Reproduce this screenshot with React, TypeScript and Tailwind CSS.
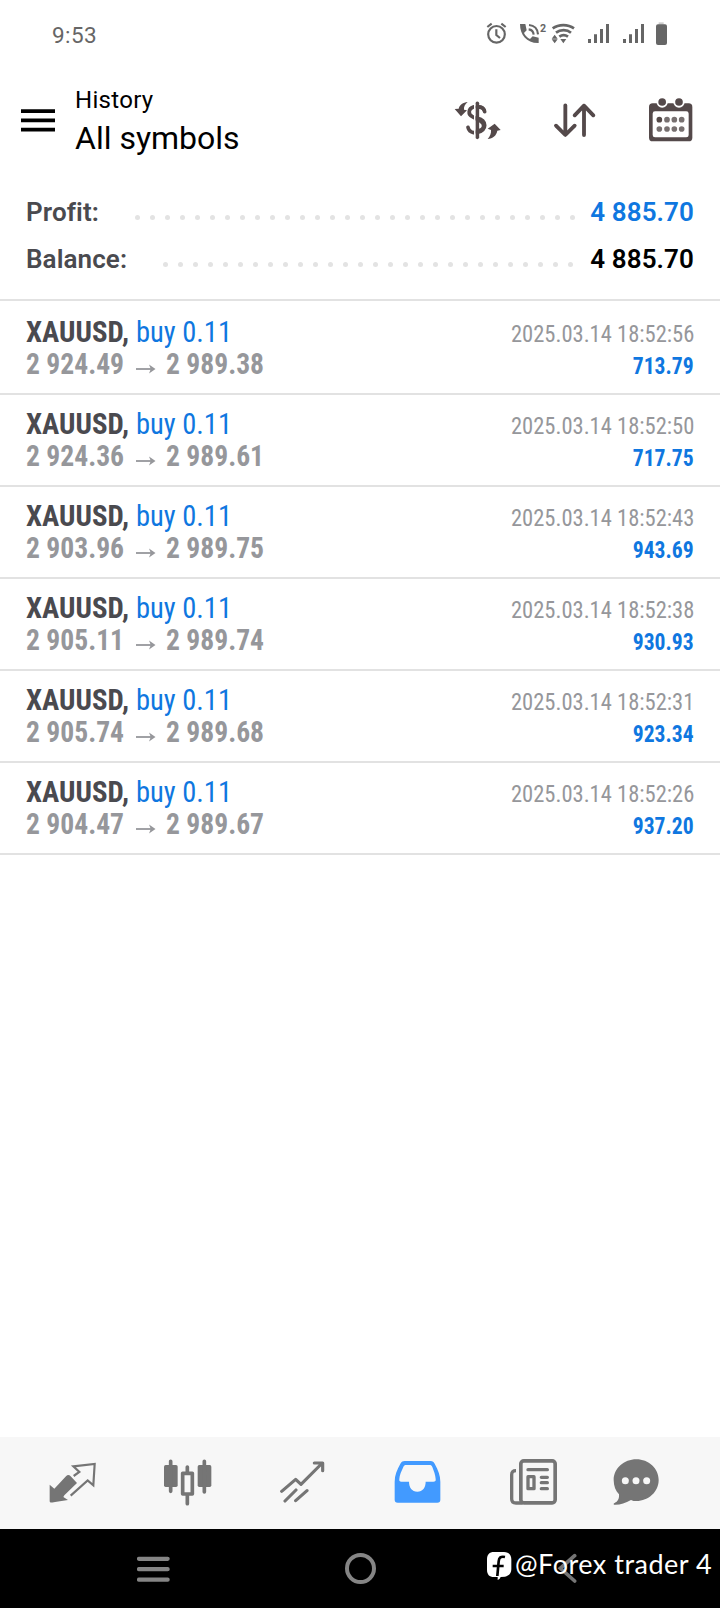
import type { ReactNode } from "react";

const GLYPH = "#54494a";
const TAB = "#757575";

function Icon({ box, className, children }: { box: string; className: string; children: ReactNode }) {
  return (
    <svg viewBox={box} className={`block shrink-0 ${className}`} fill="none" aria-hidden="true">
      {children}
    </svg>
  );
}

function Signal() {
  return (
    <Icon box="0 0 69 69" className="h-[23px] w-[23px]">
      <path fill="#666" d="M3 51h9v12H3zM21 37h9v26h-9zM39 21h9v42h-9zM57 6h9v57h-9z" />
    </Icon>
  );
}

function StatusBar() {
  return (
    <div className="flex h-[70px] items-start pt-[22px] pl-[52px]">
      <span className="-mt-px w-[434px] text-[22.5px] leading-[28px] font-[450] tracking-[0.4px] text-[#666]">9:53</span>
      <Icon box="138 66 63 69" className="h-[23px] w-[21px]">
        <circle cx="169.500" cy="103" r="25" stroke="#666" strokeWidth="6.500" />
        <path d="M169 88v17l11 9M142 81l13-10M197 81l-13-10" stroke="#666" strokeWidth="6.500" />
      </Icon>
      <Icon box="237 66 84 69" className="ml-3 h-[23px] w-[28px]">
        <path
          fill="#666"
          d="M240 72h16l4 19-8 8c4 9 10 14 18 18l8-8 18 4v16c-36 1-56-24-56-57z"
        />
        <path d="M267 75c16 1 26 12 27 28M266 88c9 1 14 7 15 16" stroke="#666" strokeWidth="6.500" />
        <text x="300" y="95" fontSize="32" fontWeight="700" fill="#666" fontFamily="Roboto, sans-serif">
          2
        </text>
      </Icon>
      <Icon box="333 66 75 69" className="ml-1 h-[23px] w-[25px]">
        <path d="M338 85c18-13 46-13 64 0M348 98c13-10 33-10 45 0M358 110c8-6 18-6 26 0" stroke="#666" strokeWidth="8" />
        <path fill="#666" d="M335 116l9-12 9 12zM335 118h18l-9 12zM361 117h18l-9 13z" />
      </Icon>
      <div className="ml-[11px] flex gap-3">
        <Signal />
        <Signal />
      </div>
      <Icon box="645 66 39 72" className="ml-2.5 h-6 w-[13px]">
        <path fill="#ccc" d="M656 67h15v7h-15z" />
        <rect x="648" y="73" width="33" height="62" rx="6" fill="#666" />
      </Icon>
    </div>
  );
}

function Header() {
  return (
    <header className="flex h-[114px] items-start">
      <Icon box="0 0 34 23" className="mt-[39px] ml-[21px] h-[23px] w-[34px]">
        <path fill="#000" d="M0 .2h34v3.800H0zM0 9.500h34v3.800H0zM0 18.800h34v3.800H0z" />
      </Icon>
      <div className="ml-5 w-[379px] pt-[16px] text-black">
        <div className="text-[24px] leading-[28px] tracking-[0.3px]">History</div>
        <h1 className="mt-[4px] text-[32px] leading-[40px] font-normal">All symbols</h1>
      </div>
      <Icon box="42 297 144 126" className="mt-[29px] h-[42px] w-12">
        <path d="M112 310v102" stroke={GLYPH} strokeWidth="11" strokeLinecap="round" />
        <path
          d="M133 331c-4-8-11-10-21-10M100 321c-15 5-17 22-3 29l26 14c14 9 9 28-11 28M101 398c-10-2-15-7-17-16"
          stroke={GLYPH}
          strokeWidth="11"
          strokeLinecap="round"
        />
        <path d="M112 321c12-2 21 4 22 14M112 355c29 3 30 38 0 42" stroke={GLYPH} strokeWidth="11" strokeLinecap="round" />
        <path d="M104 306v108" stroke="#fff" strokeWidth="4" />
        <path fill={GLYPH} d="M83 306c-14 2-24 8-27 20l-12 1 19 22 18-18-9-2c-1-9 3-16 11-23z" />
        <path fill={GLYPH} d="M143 417c16-2 26-10 29-25l10-2-18-19-21 15 10 4c1 10-3 19-10 27z" />
      </Icon>
      <Icon box="336 303 135 114" className="mt-[31px] ml-[50px] h-[38px] w-[45px]">
        <path
          d="M376 316v88M348 377l28 28 28-28M432 405v-88M404 346l28-29 28 29"
          stroke={GLYPH}
          strokeWidth="11.500"
          strokeLinecap="round"
          strokeLinejoin="round"
        />
      </Icon>
      <Icon box="621 288 144 141" className="mt-[26px] ml-[50px] h-[47px] w-12">
        <rect x="627" y="310" width="130" height="114" rx="11" fill={GLYPH} />
        <rect x="638" y="334" width="108" height="78" rx="7" fill="#fff" />
        <circle cx="666.500" cy="306" r="17" fill="#fff" />
        <circle cx="717" cy="306" r="17" fill="#fff" />
        <circle cx="666.500" cy="306" r="11.500" fill={GLYPH} />
        <circle cx="717" cy="306" r="11.500" fill={GLYPH} />
        {[658, 681, 703, 725].map((x) => (
          <g key={x}>
            <circle cx={x} cy="359" r="8.500" fill={x === 658 ? "#544948" : "#777070"} />
            <circle cx={x} cy="387" r="8.500" fill="#777070" />
          </g>
        ))}
      </Icon>
    </header>
  );
}

function SummaryLine({ label, value, dots, tone, lead }: { label: string; value: string; dots: number; tone: string; lead: string }) {
  return (
    <div className="flex h-[47px] items-start text-[26px] leading-[30px] font-semibold">
      <span className={`${lead} tracking-[0.1px] text-[#4a4a4f]`}>{label}</span>
      <span className="mt-[18px] flex flex-1 gap-[10px]">
        {Array.from({ length: dots }, (_, i) => (
          <i key={i} className="block size-[5px] rounded-full bg-[#e3e3e3]" />
        ))}
      </span>
      <span className={`tracking-[0.1px] ${tone}`}>{value}</span>
    </div>
  );
}

const deals = [
  { open: "2 924.49", close: "2 989.38", time: "2025.03.14 18:52:56", profit: "713.79" },
  { open: "2 924.36", close: "2 989.61", time: "2025.03.14 18:52:50", profit: "717.75" },
  { open: "2 903.96", close: "2 989.75", time: "2025.03.14 18:52:43", profit: "943.69" },
  { open: "2 905.11", close: "2 989.74", time: "2025.03.14 18:52:38", profit: "930.93" },
  { open: "2 905.74", close: "2 989.68", time: "2025.03.14 18:52:31", profit: "923.34" },
  { open: "2 904.47", close: "2 989.67", time: "2025.03.14 18:52:26", profit: "937.20" },
];

function DealRow({ deal }: { deal: (typeof deals)[number] }) {
  return (
    <li className="flex h-[92px] justify-between border-b-2 border-[#e2e2e2] pr-[26px] pl-[26px] whitespace-nowrap [font-stretch:75%]">
      <div className="pt-[13px] text-[30px] leading-[32px]">
        <div className="flex">
          <span className="w-[110px] origin-left scale-x-[0.96] font-bold text-[#4a4a4f]">XAUUSD,</span>
          <span className="origin-left scale-x-[0.95] text-[#0f77e0]">buy 0.11</span>
        </div>
        <div className="flex items-start font-bold text-[#96979b]">
          <span className="w-[110px] origin-left scale-x-[0.92]">{deal.open}</span>
          <Icon box="0 0 20 10" className="mt-[16px] h-[10px] w-5">
            <path d="M0 5h17" stroke="#96979b" strokeWidth="1.800" />
            <path d="M13 .5l6.500 4.500-6.500 4.500 1.800-4.500z" fill="#96979b" />
          </Icon>
          <span className="ml-[10px] origin-left scale-x-[0.92]">{deal.close}</span>
        </div>
      </div>
      <div className="flex flex-col items-end pt-[15px] leading-[32px]">
        <div className="origin-right scale-x-[0.92] text-[24.500px] text-[#96979b]">{deal.time}</div>
        <div className="origin-right scale-x-[0.9] text-[24px] font-bold text-[#0f77e0]">{deal.profit}</div>
      </div>
    </li>
  );
}

function TabBar() {
  return (
    <nav className="flex h-[92px] items-start bg-[#f7f7f7] pl-[49px]">
      <Icon box="147 96 141 126" className="mt-[25px] h-[42px] w-[47px]">
        <path fill={TAB} d="M149 164l14 12 35-37c5-5 9-5 14 0l19 20-38 37-3 5 14 9-34 5c-12 2-21 5-21-2z" />
        <path
          d="M221 138l17-12-18-17 64-7-4 64-17-15-51 46"
          stroke={TAB}
          strokeWidth="6.500"
        />
      </Icon>
      <Icon box="489 87 147 141" className="mt-[22px] ml-[67px] h-[47px] w-[49px]">
        <rect x="492" y="105" width="41" height="66" rx="5" fill={TAB} />
        <rect x="593" y="105" width="41" height="66" rx="5" fill={TAB} />
        <path d="M512 94v90M613 94v92M562 111v16M562 196v25" stroke={TAB} strokeWidth="11" strokeLinecap="round" />
        <rect x="548" y="130" width="29" height="62" stroke={TAB} strokeWidth="11" strokeLinejoin="round" />
      </Icon>
      <Icon box="837 93 138 126" className="mt-6 ml-[67px] h-[42px] w-[46px]">
        <path
          d="M845 184l42-36 16 15 61-61M943 99h25v23M855 213l33-33M887 212l34-30"
          stroke={TAB}
          strokeWidth="9.500"
          strokeLinecap="round"
          strokeLinejoin="round"
        />
      </Icon>
      <Icon box="102 90 141 129" className="mt-[23px] ml-[69px] h-[43px] w-[47px]">
        <path
          fill="#429aff"
          fillRule="evenodd"
          d="M134 93h78c6 0 9 3 12 8 11 20 17 35 17 54v54c0 6-3 9-9 9H113c-6 0-9-3-9-9v-54c0-19 7-35 18-55 3-5 6-7 12-7zM138 105c-4 0-6 2-8 6-6 13-11 24-12 36-1 6 1 8 6 8h23c0 17 9 30 25 30s25-13 25-30h23c6 0 8-2 7-8-1-12-5-23-10-36-2-4-4-6-8-6z"
        />
      </Icon>
      <Icon box="447 87 144 138" className="mt-[22px] ml-[68px] h-[46px] w-12">
        <rect x="482.500" y="92.500" width="103" height="126" rx="9" stroke={TAB} strokeWidth="11" />
        <path d="M468 122c-10 0-13 4-13 12v73c0 8 4 12 13 12h20" stroke={TAB} strokeWidth="10" />
        <path d="M504 119h58M544 142h18M544 158h18M544 176h18" stroke={TAB} strokeWidth="10" strokeLinecap="round" />
        <rect x="504" y="140" width="18" height="36" stroke={TAB} strokeWidth="10" strokeLinejoin="round" />
      </Icon>
      <Icon box="759 87 138 138" className="mt-[22px] ml-[56px] h-[46px] w-[46px]">
        <path
          fill={TAB}
          d="M829 88c37 0 67 27 67 62s-30 63-67 63c-6 0-11 0-16-3-18 10-34 15-51 14-2-2-1-4 2-5 9-4 14-12 13-26-10-10-16-25-16-43 0-35 31-62 68-62z"
        />
        <g fill="#f7f7f7">
          <circle cx="796" cy="152" r="10.500" />
          <circle cx="828" cy="152" r="10.500" />
          <circle cx="860" cy="152" r="10.500" />
        </g>
      </Icon>
    </nav>
  );
}

function SystemBar() {
  return (
    <div className="relative flex h-[79px] items-start bg-black">
      <Icon box="411 378 99 78" className="mt-[27px] ml-[137px] h-[26px] w-[33px]">
        <path d="M417 386.500h86M417 417.500h86M417 449h86" stroke="#858585" strokeWidth="12.500" strokeLinecap="round" />
      </Icon>
      <div className="mt-6 ml-[175px] size-[31px] rounded-full border-4 border-[#858585]" />
      <Icon box="590 369 60 93" className="mt-[24px] ml-[181px] h-[31px] w-5">
        <path d="M643 377l-43 38 43 38" stroke="#757575" strokeWidth="11" strokeLinecap="round" />
      </Icon>
      <div className="absolute top-[22px] left-[486px] flex text-white">
        <Icon box="18 48 78 90" className="h-[30px] w-[26px]">
          <path
            fill="#fff"
            d="M42 51h30c14 0 22 8 22 22v30c0 13-8 20-19 22l-13 1c-2 5-5 8-9 9v-9H42c-14 0-21-8-21-22V73c0-14 7-22 21-22z"
          />
          <path d="M75 66c-13-3-18 2-19 13l-4 44M38 93h33" stroke="#000" strokeWidth="8" />
        </Icon>
        <span className="-mt-[2px] ml-[3px] font-[Lato,sans-serif] text-[27px] leading-[30px] tracking-[0.5px] whitespace-nowrap">@Forex trader 4</span>
      </div>
    </div>
  );
}

export default function App() {
  return (
    <div className="flex h-[1608px] w-[720px] flex-col overflow-hidden bg-white font-[Roboto,sans-serif]">
      <StatusBar />
      <Header />
      <section className="h-[117px] border-b-2 border-[#e2e2e2] px-[26px] pt-[13px]">
        <SummaryLine label="Profit:" value="4 885.70" dots={30} tone="text-[#0f77e0]" lead="w-[109px]" />
        <SummaryLine label="Balance:" value="4 885.70" dots={28} tone="text-black" lead="w-[137px]" />
      </section>
      <ul className="flex-1 pt-[2px]">
        {deals.map((deal) => (
          <DealRow key={deal.time} deal={deal} />
        ))}
      </ul>
      <TabBar />
      <SystemBar />
    </div>
  );
}
